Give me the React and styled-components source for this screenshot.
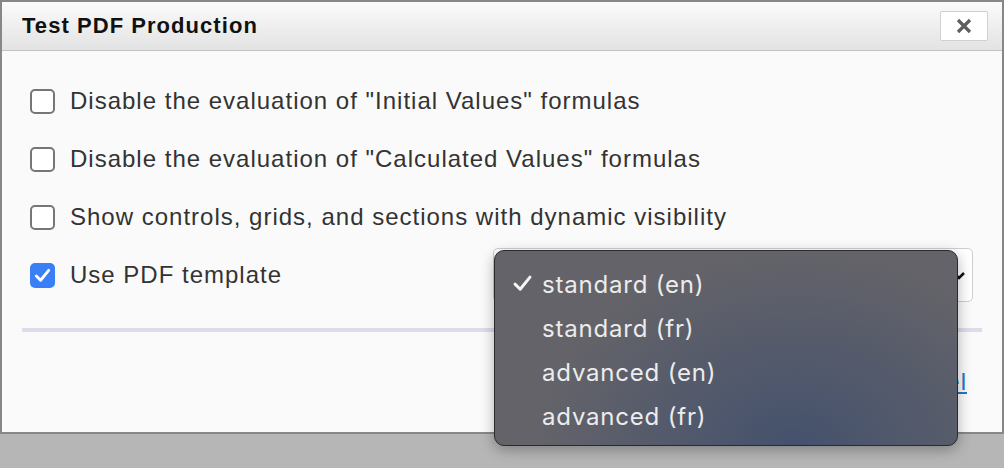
import styled, { createGlobalStyle } from "styled-components"

const Global = createGlobalStyle`
    body {
        margin: 0;
        background: #b6b6b6;
        font-family: "Liberation Sans", Arial, sans-serif;
    }
`

const Pagina = styled.div`
    position: relative;
    height: 468px;
    overflow: hidden;
`

const Ventana = styled.div`
    width: 1004px;
    height: 434px;
    box-sizing: border-box;
    border: 2px solid #878787;
    background: #fafafa;
    display: flex;
    flex-direction: column;
`

const Cabecera = styled.div`
    height: 48px;
    flex-shrink: 0;
    border-bottom: 1px solid #c2c2c2;
    background: linear-gradient(#fbfbfb, #e3e3e3);
    display: flex;
    align-items: center;
    justify-content: space-between;
    padding: 0 14px 0 20px;
`

const Titulo = styled.h1`
    margin: 0;
    font-size: 22px;
    letter-spacing: 1.05px;
    font-weight: bold;
    color: #111;
`

const BotonCerrar = styled.button`
    width: 48px;
    height: 30px;
    border: 1px solid #d0d0d0;
    border-radius: 2px;
    background: #fff;
    display: flex;
    align-items: center;
    justify-content: center;
    padding: 0;
`

const Cuerpo = styled.div`
    flex: 1;
    padding: 21px 20px 0;
    display: flex;
    flex-direction: column;
`

const Fila = styled.label`
    height: 58px;
    display: flex;
    align-items: center;
    gap: 15px;
    padding: 0 9px 0 8px;
    font-size: 24px;
    letter-spacing: 1px;
    color: #333;
`

const Casilla = styled.span`
    width: 25px;
    height: 25px;
    box-sizing: border-box;
    border-radius: 5px;
    border: ${p => (p.$marcada ? "none" : "2px solid #767676")};
    background: ${p => (p.$marcada ? "#3b7ff6" : "#fff")};
    display: flex;
    align-items: center;
    justify-content: center;
    flex-shrink: 0;
`

const Selector = styled.div`
    margin-left: auto;
    width: 480px;
    height: 54px;
    box-sizing: border-box;
    border: 1px solid #cfcfcf;
    border-radius: 5px;
    background: #fff;
    display: flex;
    align-items: center;
    justify-content: flex-end;
    padding-right: 6px;
`

const Separador = styled.div`
    height: 4px;
    margin-top: 24px;
    background: #dcdcea;
`

const Pie = styled.div`
    flex: 1;
    display: flex;
    align-items: center;
    justify-content: flex-end;
    padding: 0 15px 0 0;
`

const Enlace = styled.a`
    font-size: 24px;
    letter-spacing: 1px;
    color: #1f78c8;
    text-decoration: underline;
`

const Menu = styled.ul`
    position: absolute;
    left: 494px;
    top: 250px;
    width: 464px;
    height: 196px;
    box-sizing: border-box;
    margin: 0;
    padding: 11px 0 0;
    list-style: none;
    border: 1px solid #2b2b2e;
    border-radius: 10px;
    background:
        radial-gradient(ellipse 260px 200px at 300px 200px, rgba(62, 78, 110, 0.85), rgba(62, 78, 110, 0) 100%),
        #646369;
    box-shadow: 0 4px 14px rgba(0, 0, 0, 0.3);
    font-family: Inter, "Open Sans", sans-serif;
`

const Opcion = styled.li`
    position: relative;
    height: 44px;
    display: flex;
    align-items: center;
    padding-left: 47px;
    font-size: 24px;
    color: #ececec;
    letter-spacing: 0.8px;
`

const Marca = styled.span`
    position: absolute;
    left: 16px;
    top: 10px;
    display: flex;
`

const opciones = ["Disable the evaluation of \"Initial Values\" formulas",
    "Disable the evaluation of \"Calculated Values\" formulas",
    "Show controls, grids, and sections with dynamic visibility"]

const plantillas = ["standard (en)", "standard (fr)", "advanced (en)", "advanced (fr)"]

const Check = ({ color, size, width }) => (
    <svg width={size} height={size} viewBox="0 0 20 20">
        <path d="M3.5 10.5 L8 15 L16.5 4.5" fill="none" stroke={color} strokeWidth={width} strokeLinecap="round" strokeLinejoin="round" />
    </svg>
)

const App = () => {
    return (
        <Pagina>
            <Global />
            <Ventana>
                <Cabecera>
                    <Titulo>Test PDF Production</Titulo>
                    <BotonCerrar>
                        <svg width="18" height="18" viewBox="0 0 18 18">
                            <path d="M3 3 L15 15 M15 3 L3 15" stroke="#5e5e5e" strokeWidth="3.2" />
                        </svg>
                    </BotonCerrar>
                </Cabecera>
                <Cuerpo>
                    {opciones.map(t => (
                        <Fila key={t}>
                            <Casilla />
                            {t}
                        </Fila>
                    ))}
                    <Fila>
                        <Casilla $marcada>
                            <Check color="#fff" size={19} width={3} />
                        </Casilla>
                        Use PDF template
                        <Selector>
                            <svg width="14" height="14" viewBox="0 0 14 14">
                                <path d="M2 5 L7 10 L12 5" fill="none" stroke="#111" strokeWidth="2.5" />
                            </svg>
                        </Selector>
                    </Fila>
                    <Separador />
                    <Pie>
                        <Enlace href="#">Cancel</Enlace>
                    </Pie>
                </Cuerpo>
            </Ventana>
            <Menu>
                {plantillas.map((p, i) => (
                    <Opcion key={p}>
                        {i === 0 && (
                            <Marca>
                                <Check color="#f4f4f4" size={23} width={2.6} />
                            </Marca>
                        )}
                        {p}
                    </Opcion>
                ))}
            </Menu>
        </Pagina>
    )
}

export default App
